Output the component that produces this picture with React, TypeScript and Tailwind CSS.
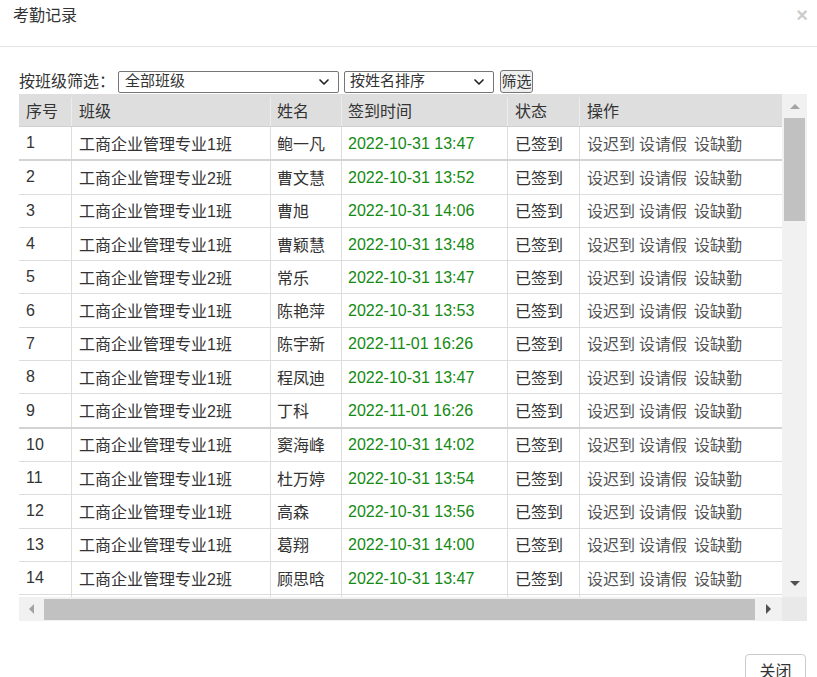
import { ChevronDown } from 'lucide-react'

type Row = { no: number; cls: string; name: string; time: string; thick?: boolean }

const ROWS: Row[] = [
  { no: 1, cls: '工商企业管理专业1班', name: '鲍一凡', time: '2022-10-31 13:47', thick: true },
  { no: 2, cls: '工商企业管理专业2班', name: '曹文慧', time: '2022-10-31 13:52' },
  { no: 3, cls: '工商企业管理专业1班', name: '曹旭', time: '2022-10-31 14:06' },
  { no: 4, cls: '工商企业管理专业1班', name: '曹颖慧', time: '2022-10-31 13:48' },
  { no: 5, cls: '工商企业管理专业2班', name: '常乐', time: '2022-10-31 13:47' },
  { no: 6, cls: '工商企业管理专业1班', name: '陈艳萍', time: '2022-10-31 13:53' },
  { no: 7, cls: '工商企业管理专业1班', name: '陈宇新', time: '2022-11-01 16:26' },
  { no: 8, cls: '工商企业管理专业1班', name: '程凤迪', time: '2022-10-31 13:47' },
  { no: 9, cls: '工商企业管理专业2班', name: '丁科', time: '2022-11-01 16:26', thick: true },
  { no: 10, cls: '工商企业管理专业1班', name: '窦海峰', time: '2022-10-31 14:02' },
  { no: 11, cls: '工商企业管理专业1班', name: '杜万婷', time: '2022-10-31 13:54' },
  { no: 12, cls: '工商企业管理专业1班', name: '高森', time: '2022-10-31 13:56' },
  { no: 13, cls: '工商企业管理专业1班', name: '葛翔', time: '2022-10-31 14:00' },
  { no: 14, cls: '工商企业管理专业2班', name: '顾思晗', time: '2022-10-31 13:47' },
]

const cell = 'flex items-center px-[7px] border-r border-[#dddddd] h-full shrink-0'

export default function App() {
  return (
    <div
      className="w-[817px] h-[677px] bg-white overflow-hidden text-[#333] relative"
      style={{ fontFamily: '"Liberation Sans", "Noto Sans CJK SC", sans-serif' }}
    >
      {/* 标题栏 */}
      <div className="h-[47px] border-b border-[#e5e5e5] flex items-start justify-between pl-[13px] pr-[9px] pt-[5px]">
        <h1 className="text-[16px] leading-[22px] text-[#333]">考勤记录</h1>
        <span className="text-[20px] leading-[20px] font-bold text-[#cccccc]">×</span>
      </div>

      <div className="pl-[19px] pr-[10px] pt-[23px]">
        {/* 筛选 */}
        <div className="flex items-center h-[23px]">
          <span className="text-[16px] leading-[22px] w-[99px]">按班级筛选：</span>
          <div className="w-[221px] h-[22px] border border-[#767676] rounded-[2px] flex items-center justify-between pl-[6px] pr-[6px] text-[15px]">
            <span>全部班级</span>
            <ChevronDown className="w-[16px] h-[16px] text-[#222]" strokeWidth={2.5} />
          </div>
          <div className="ml-[5px] w-[150px] h-[22px] border border-[#767676] rounded-[2px] flex items-center justify-between pl-[5px] pr-[6px] text-[15px]">
            <span>按姓名排序</span>
            <ChevronDown className="w-[16px] h-[16px] text-[#222]" strokeWidth={2.5} />
          </div>
          <button className="ml-[6px] w-[33px] h-[23px] bg-[#efefef] border border-[#767676] rounded-[3px] text-[15px] leading-[20px] px-0">
            筛选
          </button>
        </div>

        {/* 表格 */}
        <div className="mt-[1px] w-[788px] h-[527px] flex flex-col">
          <div className="flex h-[503px]">
            <div className="w-[763px] h-full overflow-hidden text-[16px]">
              <div className="flex h-[33px] bg-[#dedede] border-b border-[#d0d0d0] pt-[3px]">
                <div className={`${cell} w-[53px] border-[#ececec]`}>序号</div>
                <div className={`${cell} w-[199px] border-[#ececec] pl-[7px]`}>班级</div>
                <div className={`${cell} w-[71px] border-[#ececec] pl-[6px]`}>姓名</div>
                <div className={`${cell} w-[166px] border-[#ececec] pl-[6px]`}>签到时间</div>
                <div className={`${cell} w-[72px] border-[#ececec]`}>状态</div>
                <div className={`${cell} w-[202px] border-r-0`}>操作</div>
              </div>
              {ROWS.map(r => (
                <div
                  key={r.no}
                  className={`flex ${r.thick ? 'h-[34.3px] border-b-2 border-[#d3d3d3]' : 'h-[33.3px] border-b border-[#dddddd]'}`}
                >
                  <div className={`${cell} w-[53px]`}>{r.no}</div>
                  <div className={`${cell} w-[199px] pl-[7px] pt-[3px]`}>{r.cls}</div>
                  <div className={`${cell} w-[71px] pl-[6px] pt-[3px]`}>{r.name}</div>
                  <div className={`${cell} w-[166px] pl-[6px] pt-[1px] text-[#138a13]`}>{r.time}</div>
                  <div className={`${cell} w-[72px] pt-[3px]`}>已签到</div>
                  <div className={`${cell} w-[202px] border-r-0 text-[#555] pt-[3px]`}>
                    <span className="mr-[4px]">设迟到</span>
                    <span className="mr-[7px]">设请假</span>
                    <span>设缺勤</span>
                  </div>
                </div>
              ))}
              {/* 第 15 行只露出边框 */}
              <div className="flex h-[33px]">
                <div className={`${cell} w-[53px]`} />
                <div className={`${cell} w-[199px]`} />
                <div className={`${cell} w-[71px]`} />
                <div className={`${cell} w-[166px]`} />
                <div className={`${cell} w-[72px]`} />
                <div className={`${cell} w-[202px] border-r-0`} />
              </div>
            </div>
            {/* 竖向滚动条 */}
            <div className="w-[25px] h-full bg-[#f1f1f1] flex flex-col items-center">
              <div className="h-[24px] flex items-center justify-center">
                <div className="w-0 h-0 border-l-[5px] border-r-[5px] border-b-[5px] border-l-transparent border-r-transparent border-b-[#a3a3a3]" />
              </div>
              <div className="w-[21px] h-[103px] bg-[#c1c1c1]" />
              <div className="flex-1" />
              <div className="h-[24px] flex items-center justify-center pb-[3px]">
                <div className="w-0 h-0 border-l-[5px] border-r-[5px] border-t-[5px] border-l-transparent border-r-transparent border-t-[#505050]" />
              </div>
            </div>
          </div>
          {/* 横向滚动条 */}
          <div className="flex h-[24px]">
            <div className="w-[763px] h-full bg-[#f1f1f1] flex items-center">
              <div className="w-[25px] flex items-center justify-center">
                <div className="w-0 h-0 border-t-[5px] border-b-[5px] border-r-[5px] border-t-transparent border-b-transparent border-r-[#a3a3a3]" />
              </div>
              <div className="w-[711px] h-[21px] bg-[#c1c1c1]" />
              <div className="flex-1 flex items-center justify-center">
                <div className="w-0 h-0 border-t-[5px] border-b-[5px] border-l-[5px] border-t-transparent border-b-transparent border-l-[#505050]" />
              </div>
            </div>
            <div className="w-[25px] h-full bg-[#e9e9e9]" />
          </div>
        </div>

        {/* 底部 */}
        <div className="flex justify-end pt-[33px] pr-0">
          <button className="w-[61px] h-[36px] border border-[#cccccc] rounded-[4px] bg-white text-[16px] text-[#333] leading-[34px] mr-[1px]">
            关闭
          </button>
        </div>
      </div>
    </div>
  )
}
